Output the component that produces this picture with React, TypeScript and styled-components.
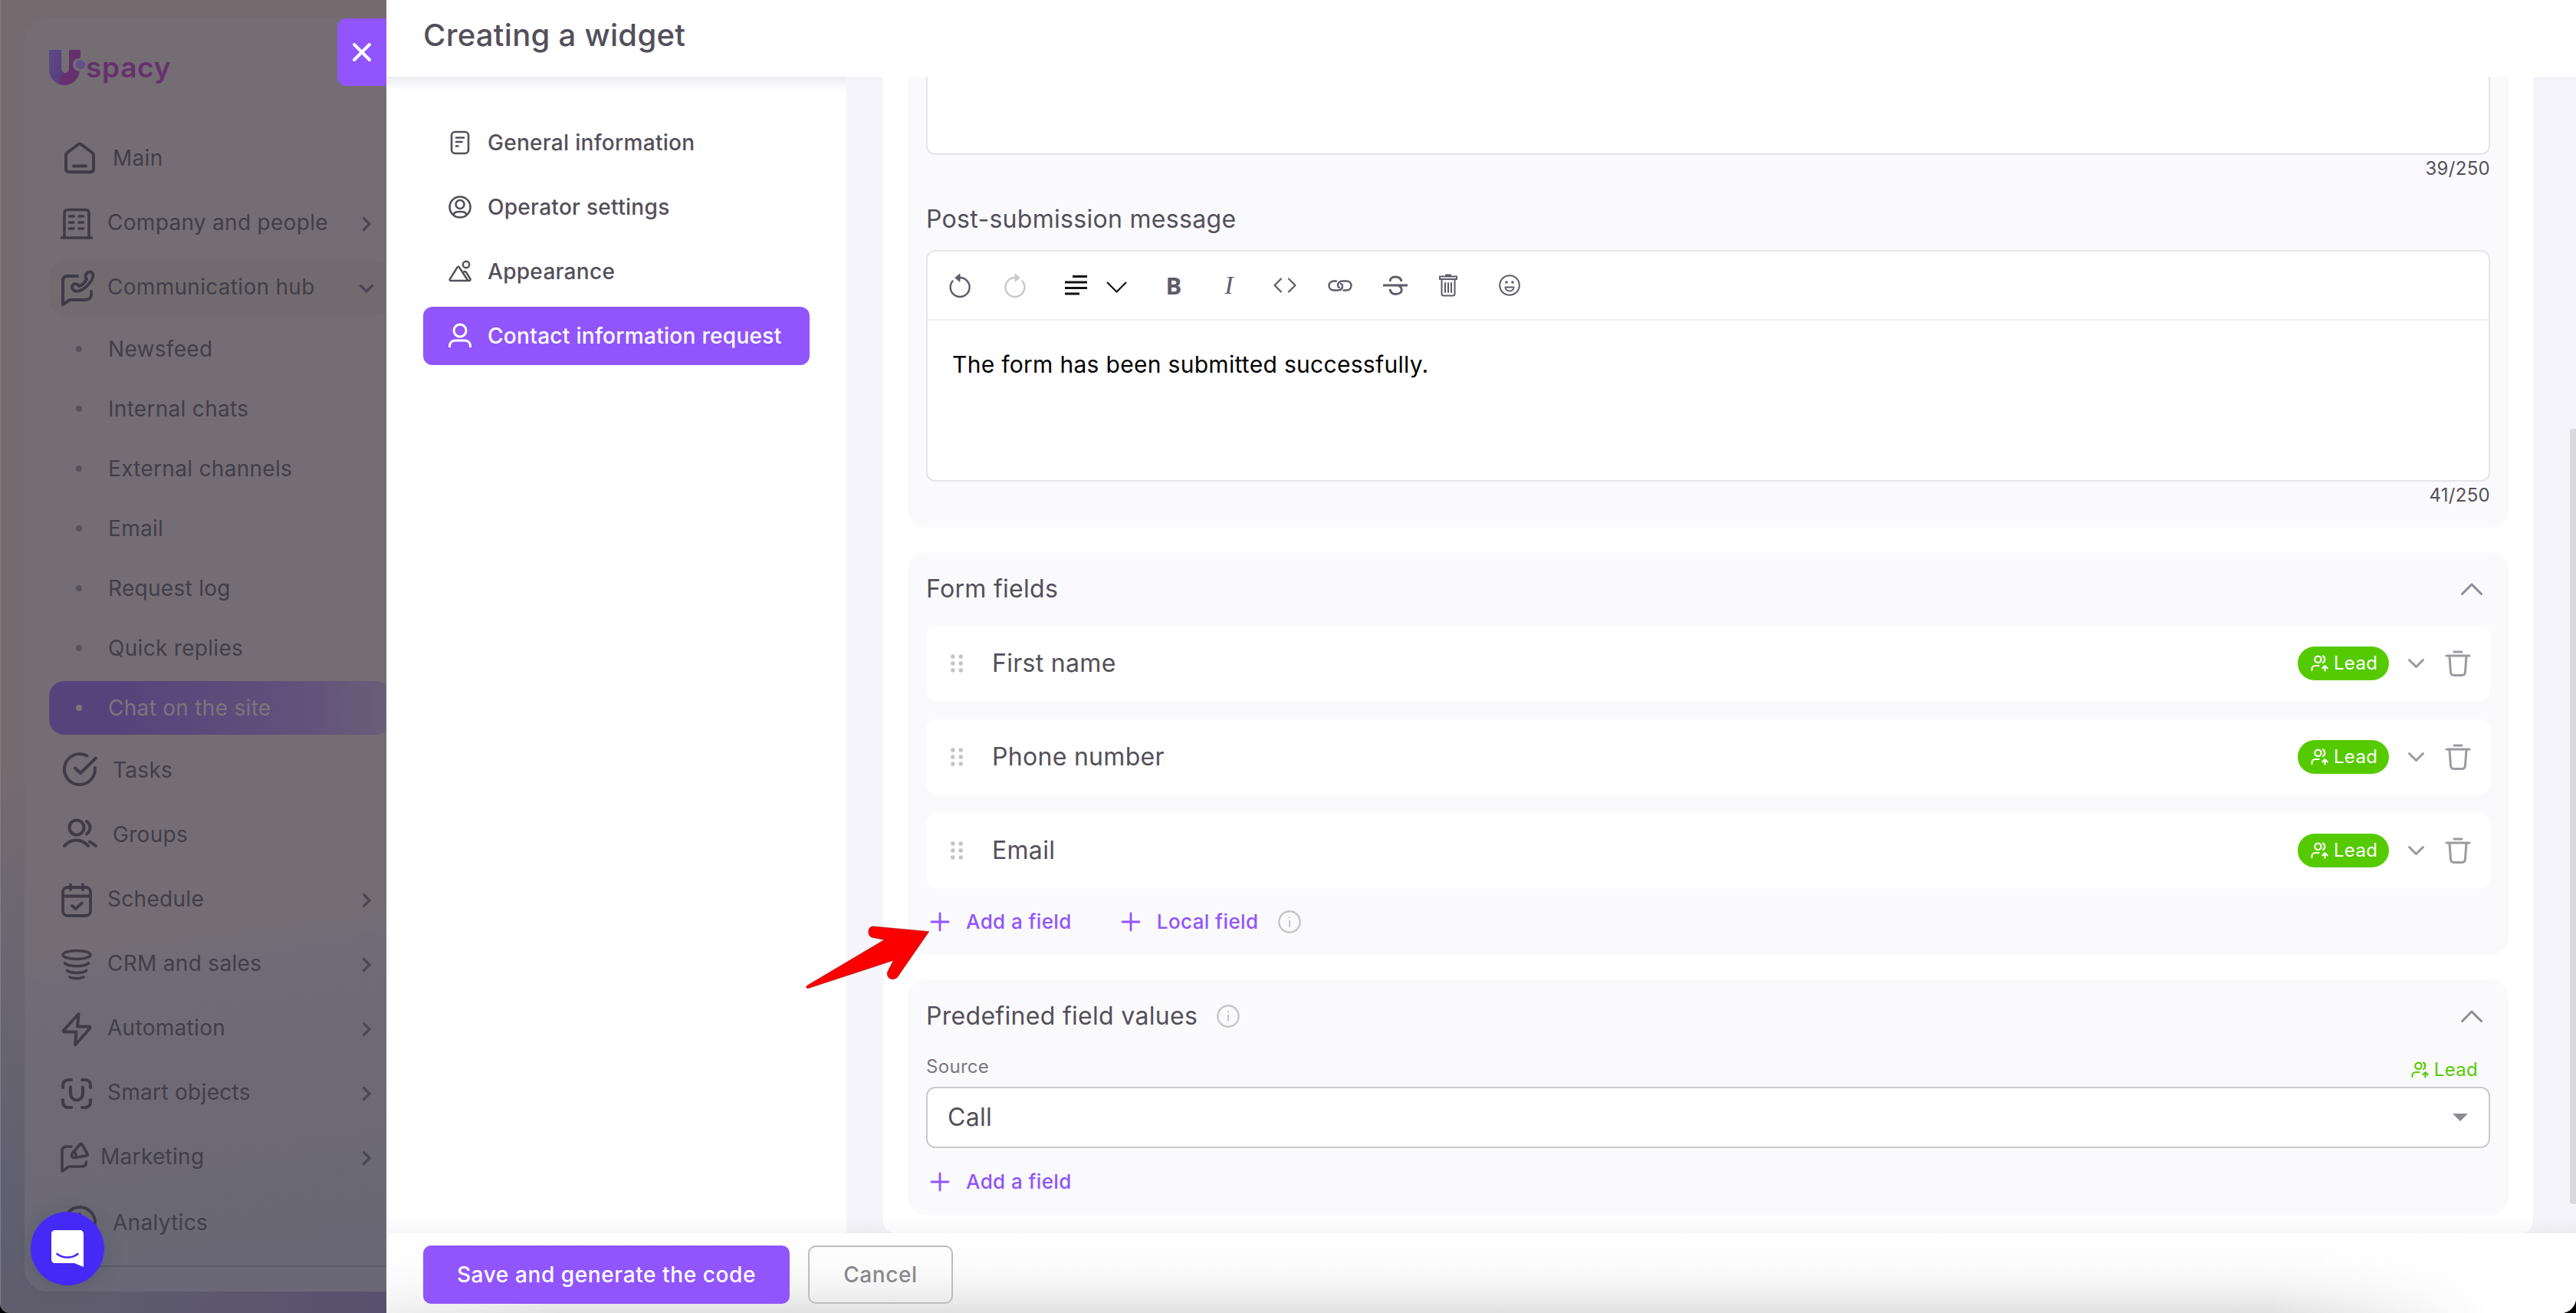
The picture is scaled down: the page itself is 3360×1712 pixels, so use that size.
import React from "react";
import styled, { createGlobalStyle } from "styled-components";

const GlobalStyle = createGlobalStyle`
  * { box-sizing: border-box; }
  html, body { margin: 0; padding: 0; background: #000; }
  body { font-family: Inter, "Liberation Sans", sans-serif; width: 3360px; height: 1712px; overflow: hidden; }
  button { font-family: inherit; border: 0; padding: 0; background: none; }
  svg { display: block; flex: none; overflow: visible; }
`;

const Page = styled.div`
  position: relative;
  display: flex;
  width: 3360px;
  height: 1712px;
  overflow: hidden;
  border-radius: 0 0 20px 12px;
  letter-spacing: 0.3px;
`;

/* ---------- dimmed sidebar ---------- */

const Backdrop = styled.div`
  width: 504px;
  flex: none;
  padding: 24px 0 28px 31px;
  border-left: 1px solid #817f84;
  background:
    linear-gradient(90deg, rgba(90, 76, 118, 0) 20%, rgba(86, 74, 112, 0.7) 100%) 0 100% / 100% 28px no-repeat,
    linear-gradient(180deg, #756a6e 0, #756a6e 58%, #6b6772 72%, #605f70 92%, #5f5d6c 100%);
`;

const Sidebar = styled.aside`
  display: flex;
  flex-direction: column;
  height: 1660px;
  padding-left: 32px;
  border-radius: 30px 0 0 30px;
  overflow: hidden;
  background: linear-gradient(172deg, #746d74 0, #746d74 71%, #706c77 73%, #6e6a75 82%, #6a6876 96%);
`;

const Logo = styled.div`
  display: flex;
  align-items: flex-start;
  height: 146px;
  padding-top: 41px;
`;

const LogoText = styled.span`
  margin-left: 5px;
  font-size: 37px;
  line-height: 46px;
  font-weight: 600;
  letter-spacing: 0.7px;
  color: #66306e;
`;

const MenuRow = styled.div<{ $open?: boolean; $gap?: number }>`
  display: flex;
  align-items: center;
  flex: none;
  height: 72px;
  width: 446px;
  margin-bottom: ${(p) => p.$gap ?? 12}px;
  border-radius: 22px;
  background: ${(p) => (p.$open ? "#716b70" : "transparent")};
`;

const MenuIcon = styled.span<{ $w: number; $pad?: number }>`
  display: flex;
  width: ${(p) => p.$w}px;
  padding-left: ${(p) => p.$pad ?? 14}px;
  color: #3f3b47;
`;

const MenuText = styled.span<{ $lift?: boolean }>`
  flex: 1;
  font-size: 28px;
  line-height: 40px;
  white-space: nowrap;
  color: #413e49;
  margin-top: ${(p) => (p.$lift ? -5 : 0)}px;
`;

const MenuChevron = styled.span`
  display: flex;
  justify-content: center;
  width: 40px;
  margin-right: 12px;
  color: #4b4754;
`;

const SubList = styled.div`
  display: flex;
  flex-direction: column;
  gap: 8px;
  margin: -4px 0 10px;
`;

const SubItem = styled.div<{ $active?: boolean }>`
  display: flex;
  align-items: center;
  height: 70px;
  width: 446px;
  padding-left: 35px;
  gap: 34px;
  border-radius: 20px;
  font-size: 28px;
  line-height: 40px;
  white-space: nowrap;
  color: ${(p) => (p.$active ? "#7c757b" : "#413e49")};
  background: ${(p) =>
    p.$active ? "linear-gradient(90deg, #57437b 0, #57437b 20%, #5f4e7b 62%, #64547a 80%, #6a5f78 100%)" : "transparent"};
`;

const Bullet = styled.i<{ $active?: boolean }>`
  width: 8px;
  height: 8px;
  border-radius: 50%;
  background: ${(p) => (p.$active ? "#7c757b" : "#55525f")};
`;

const SidebarDivider = styled.div`
  height: 2px;
  margin-top: 8px;
  background: #5e5b67;
`;

const CloseButton = styled.button`
  position: absolute;
  left: 440px;
  top: 24px;
  width: 64px;
  height: 88px;
  display: flex;
  align-items: center;
  justify-content: center;
  border-radius: 12px 0 0 12px;
  background: #9155fd;
  color: #fff;
`;

const ChatLauncher = styled.button`
  position: absolute;
  left: 40px;
  top: 1580px;
  width: 96px;
  height: 96px;
  display: flex;
  align-items: center;
  justify-content: center;
  border-radius: 50%;
  background: #4529f7;
  box-shadow: 0 4px 24px rgba(60, 60, 75, 0.25);
`;

/* ---------- drawer ---------- */

const Drawer = styled.main`
  display: flex;
  flex-direction: column;
  flex: 1;
  min-width: 0;
  background: #fff;
`;

const Header = styled.header`
  display: flex;
  align-items: center;
  height: 100px;
  flex: none;
  padding: 0 0 9px 48px;
`;

const Title = styled.h1`
  margin: 0;
  font-size: 40px;
  line-height: 56px;
  font-weight: 500;
  color: #544f5a;
`;

const Body = styled.div`
  display: flex;
  height: 1508px;
  flex: none;
  background: linear-gradient(0deg, #ededf0 0, rgba(245, 244, 251, 0) 22px), #f5f4fb;
`;

const Nav = styled.nav`
  display: flex;
  flex-direction: column;
  gap: 8px;
  width: 600px;
  flex: none;
  padding: 48px 48px 0;
  background:
    linear-gradient(180deg, #ecebf1 0, rgba(255, 255, 255, 0) 18px),
    linear-gradient(0deg, #f7f7f8 0, rgba(255, 255, 255, 0) 22px),
    #fff;
`;

const NavItem = styled.div<{ $active?: boolean }>`
  display: flex;
  align-items: center;
  gap: 21px;
  height: 76px;
  padding-left: 33px;
  border-radius: 12px;
  font-size: 28px;
  line-height: 40px;
  font-weight: 500;
  white-space: nowrap;
  color: ${(p) => (p.$active ? "#fff" : "#544f5a")};
  background: ${(p) => (p.$active ? "#9155fd" : "transparent")};
`;

const Content = styled.div`
  display: flex;
  flex-direction: column;
  gap: 32px;
  width: 2152px;
  margin-left: 48px;
  padding: 0 32px;
  border-radius: 0 0 16px 16px;
  background: linear-gradient(0deg, #f7f7f8 0, rgba(255, 255, 255, 0) 22px), #fff;
`;

const ScrollTrack = styled.div`
  flex: 1;
  display: flex;
  justify-content: flex-end;
  padding-top: 459px;
`;

const ScrollThumb = styled.div`
  width: 8px;
  height: 1011px;
  border-radius: 4px 0 0 4px;
  background: #d9d9da;
`;

const Card = styled.section<{ $first?: boolean }>`
  display: flex;
  flex-direction: column;
  padding: 0 24px;
  padding-bottom: ${(p) => (p.$first ? 26 : 0)}px;
  border-radius: ${(p) => (p.$first ? "0 0 24px 24px" : "24px")};
  background: #fafafc;
`;

const Editor = styled.div<{ $cut?: boolean }>`
  display: flex;
  flex-direction: column;
  height: ${(p) => (p.$cut ? 102 : 302)}px;
  border: 2px solid #e5e5e7;
  border-top-width: ${(p) => (p.$cut ? 0 : 2)}px;
  border-radius: ${(p) => (p.$cut ? "0 0 12px 12px" : "12px")};
  background: #fff;
`;

const Counter = styled.div`
  height: 34px;
  text-align: right;
  font-size: 24px;
  line-height: 36px;
  color: #544f5a;
`;

const FieldLabel = styled.div`
  margin: 30px 0 20px;
  font-size: 32px;
  line-height: 40px;
  color: #544f5a;
`;

const Toolbar = styled.div`
  display: flex;
  align-items: center;
  height: 90px;
  border-bottom: 2px solid #eeeeee;
  color: #5f5b6b;
`;

const Tool = styled.span<{ $w: number; $color?: string }>`
  display: flex;
  align-items: center;
  justify-content: center;
  width: ${(p) => p.$w}px;
  height: 40px;
  color: ${(p) => p.$color ?? "inherit"};
`;

const BoldGlyph = styled.b`
  font: 700 31px/40px "Open Sans", sans-serif;
`;

const ItalicGlyph = styled.i`
  font: italic 500 34px/40px "Liberation Serif", serif;
`;

const EditorText = styled.p`
  margin: 36px 0 0 32px;
  font-size: 30px;
  line-height: 42px;
  color: #000;
`;

const CardHeader = styled.div<{ $h: number }>`
  display: flex;
  align-items: center;
  height: ${(p) => p.$h}px;
  padding-right: 10px;
  color: #8f8c95;
`;

const CardTitle = styled.h2`
  margin: 0 25px 0 0;
  font-size: 32px;
  line-height: 44px;
  font-weight: 400;
  color: #544f5a;
`;

const Spacer = styled.span`
  flex: 1;
`;

const FieldList = styled.div`
  display: flex;
  flex-direction: column;
  gap: 24px;
`;

const FieldRow = styled.div`
  display: flex;
  align-items: center;
  height: 98px;
  padding: 0 25px 0 32px;
  border-radius: 14px;
  background: #fff;
  color: #9b99a1;
`;

const FieldName = styled.span`
  flex: 1;
  margin-left: 38px;
  font-size: 32px;
  line-height: 44px;
  color: #544f5a;
`;

const LeadPill = styled.span`
  display: flex;
  align-items: center;
  gap: 6px;
  width: 119px;
  height: 44px;
  margin-right: 25px;
  padding-left: 17px;
  border-radius: 22px;
  font-size: 24px;
  line-height: 32px;
  color: #fff;
  background: #56ca00;
`;

const LeadTag = styled.span`
  display: flex;
  align-items: center;
  gap: 6px;
  margin: 5px 16px 0 0;
  font-size: 24px;
  line-height: 36px;
  color: #56ca00;
`;

const RowAction = styled.span<{ $w: number; $mr?: number }>`
  display: flex;
  justify-content: center;
  width: ${(p) => p.$w}px;
  margin-right: ${(p) => p.$mr ?? 0}px;
`;

const ActionRow = styled.div`
  display: flex;
  align-items: center;
  height: 87px;
  padding-left: 6px;
`;

const AddButton = styled.button<{ $mr?: number }>`
  display: flex;
  align-items: center;
  gap: 22px;
  margin-right: ${(p) => p.$mr ?? 0}px;
  font-size: 26px;
  line-height: 40px;
  font-weight: 500;
  letter-spacing: 0.4px;
  color: #9155fd;
`;

const SourceRow = styled.div`
  display: flex;
  justify-content: space-between;
  align-items: flex-start;
  height: 45px;
`;

const SourceLabel = styled.span`
  font-size: 24px;
  line-height: 37px;
  color: #7b7881;
`;

const Select = styled.div`
  display: flex;
  align-items: center;
  justify-content: space-between;
  height: 80px;
  padding: 0 27px 0 26px;
  border: 2px solid #cbcbce;
  border-radius: 12px;
  font-size: 32px;
  line-height: 44px;
  color: #544f5a;
  background: #fff;
`;

const Footer = styled.footer`
  display: flex;
  align-items: center;
  gap: 24px;
  height: 104px;
  flex: none;
  padding: 4px 0 0 48px;
  background:
    linear-gradient(90deg, rgba(255, 255, 255, 0.5) 0, rgba(255, 255, 255, 0) 8%, rgba(255, 255, 255, 0) 86%, #fff 96%),
    linear-gradient(180deg, #fff 0, #fcfcfc 40%, #f3f3f4 70%, #e2e2e2 100%);
`;

const Button = styled.button<{ $primary?: boolean }>`
  height: 76px;
  width: ${(p) => (p.$primary ? 478 : 189)}px;
  border: ${(p) => (p.$primary ? "0" : "2px solid #bdbdbf")};
  border-radius: 10px;
  font-size: 28px;
  line-height: 40px;
  font-weight: 500;
  letter-spacing: 0.6px;
  color: ${(p) => (p.$primary ? "#fff" : "#8a888c")};
  background: ${(p) => (p.$primary ? "#9155fd" : "transparent")};
`;

const PointerOverlay = styled.svg`
  position: absolute;
  left: 1040px;
  top: 1180px;
`;

/* ---------- icons ---------- */

type IconProps = { w: number; h: number; sw?: number; children: React.ReactNode; fill?: string };
const Icon = ({ w, h, sw = 3, fill = "none", children }: IconProps) => (
  <svg
    width={w}
    height={h}
    viewBox={`0 0 ${w} ${h}`}
    fill={fill}
    stroke="currentColor"
    strokeWidth={sw}
    strokeLinecap="round"
    strokeLinejoin="round"
  >
    {children}
  </svg>
);

const ChevronRight = () => (
  <Icon w={12} h={20} sw={3.2}>
    <path d="M1.5 1.5 10 10 1.5 18.5" strokeLinecap="butt" strokeLinejoin="miter" />
  </Icon>
);
const ChevronDown = () => (
  <Icon w={20} h={12} sw={3.2}>
    <path d="M1.5 1.5 10 10 18.5 1.5" strokeLinecap="butt" strokeLinejoin="miter" />
  </Icon>
);

const icons = {
  home: (
    <Icon w={48} h={44} sw={4}>
      <path d="M6 18.500C6 17 6.600 16 7.800 15L21.800 4.500C23.200 3.300 24.800 3.300 26.200 4.500L40.200 15C41.400 16 42 17 42 18.500V36C42 38.800 40.500 40.300 38 40.300H10C7.500 40.300 6 38.800 6 36Z" />
      <path d="M16 32.500H32" />
    </Icon>
  ),
  company: (
    <Icon w={44} h={44} sw={3.6}>
      <path d="M2.500 40H41.500" />
      <path d="M6 40V8C6 5 7.500 3.500 10.500 3.500H33.500C36.500 3.500 38 5 38 8V40" />
      <path d="M12.500 12H18M25 12H30.500M12.500 20H18M25 20H30.500M12.500 28H18M25 28H30.500" />
    </Icon>
  ),
  hub: (
    <Icon w={46} h={48} sw={4}>
      <path d="M23 8H10C6 8 4 10 4 14V45L13 39H33C38 39 41 36 41 32V28" />
      <path d="M34 6C36 2 41 1 43 5C44 8 43 11 41 14C37 20 32 25 26 27C21 29 16 27 16 22C17 17 22 17 25 21C29 20 33 16 35 12C33 10 33 8 34 6Z" />
    </Icon>
  ),
  tasks: (
    <Icon w={48} h={46} sw={4}>
      <path d="M33.500 4.500A20 20 0 1 0 43.800 20" />
      <path d="M18 20.500 25 27 45 7.500" />
    </Icon>
  ),
  groups: (
    <Icon w={48} h={42} sw={4}>
      <circle cx="21" cy="12" r="9.500" />
      <path d="M34 4C40 8 40 16 34 20.500" />
      <path d="M5 36C14 26 27 26 36 36" />
      <path d="M38 30.500C41 32 43.500 34 46 36" />
    </Icon>
  ),
  schedule: (
    <Icon w={44} h={46} sw={3.8}>
      <rect x="4" y="6" width="36" height="37" rx="6" />
      <path d="M4 17.500H40M14 2.500V9M30 2.500V9M16 30 20.500 34 29 26.500" />
    </Icon>
  ),
  crm: (
    <Icon w={44} h={44} sw={3.6}>
      <ellipse cx="22" cy="9" rx="18" ry="5.500" />
      <path d="M6.500 20C13 25 31 25 37.500 20M9.500 29.500C15 33.500 29 33.500 34.500 29.500M13 38C18 40.500 26 40.500 31 38" />
    </Icon>
  ),
  automation: (
    <Icon w={44} h={46} sw={4}>
      <path d="M24.500 3 5 24.500C4.500 25.500 5 26.500 6 26.500H21.500L20 43.500 39.500 21.500C40 20.500 39.500 19.500 38.500 19.500H23Z" />
    </Icon>
  ),
  smart: (
    <Icon w={44} h={44} sw={4.2}>
      <path d="M4 14V11C4 7 7 4 11 4H15M29 4H33C37 4 40 7 40 11V14M4 30V33C4 37 7 40 11 40H15M29 40H33C37 40 40 37 40 33V30" />
      <path d="M14 13.500V22C14 27 17.500 30.500 22 30.500C26.500 30.500 30 27 30 22V13.500" />
    </Icon>
  ),
  marketing: (
    <Icon w={42} h={42} sw={3.6}>
      <path d="M15 6H9C5 6 3 8 3 12V38L12 32H29C33 32 34.500 30 34.500 26" />
      <path d="M26 3.500C27.500 2 28 2 29 3.500L36 15.500C36.500 17 36.200 17.500 35 17.800L19 20.500C15.500 20.500 14.500 17 16.500 14.500ZM20 14 22 20" />
    </Icon>
  ),
  analytics: (
    <Icon w={48} h={46} sw={4}>
      <circle cx="24" cy="23" r="20" />
      <path d="M24 12V23L32 30" />
    </Icon>
  ),
};

const navIcons = [
  <Icon w={30} h={32} sw={2.6} key="doc">
    <rect x="4" y="2" width="22" height="28" rx="4.500" />
    <path d="M10 9.500H20M10 15H17.500M10 20.500H12.500" />
  </Icon>,
  <Icon w={30} h={32} sw={2.6} key="op">
    <circle cx="15" cy="16" r="13.500" />
    <circle cx="15" cy="12.500" r="5.500" />
    <path d="M6.500 26C7.500 22.500 10 22 15 22C20 22 22.500 22.500 23.500 26" />
  </Icon>,
  <Icon w={30} h={32} sw={2.4} key="ap">
    <circle cx="23" cy="7" r="4.200" />
    <path d="M11.500 10.500C12.500 9.500 13.500 9.500 14.300 11L25.500 28H3C1.500 28 1.200 27 1.800 25.800ZM19 17.500C20.500 15.500 22 15.500 23 17L28.300 25.500C29 27 28.500 28 27 28H25" />
  </Icon>,
  <Icon w={30} h={32} sw={3} key="us">
    <circle cx="15" cy="9" r="8" />
    <path d="M1.500 31V29C1.500 25 4.500 22 8.500 22H21.500C25.500 22 28.500 25 28.500 29V31" strokeLinecap="butt" />
  </Icon>,
];

const LeadIcon = () => (
  <Icon w={24} h={24} sw={2.2}>
    <circle cx="9.500" cy="6.800" r="4.200" />
    <path d="M1.500 21V19.500C1.500 17 3.500 15 6 15H10.500M16 2.500C19 4 19 9.500 16 11M18.500 21.500V16M15.300 18.300 18.500 15.200 21.700 18.300" />
  </Icon>
);

const TrashOutline = () => (
  <Icon w={34} h={36} sw={3}>
    <path d="M12 3H22M2 8H32M6 8.500 7.500 29C7.700 32 9 33.500 12 33.500H22C25 33.500 26.300 32 26.500 29L28 8.500" />
  </Icon>
);

const SmallChevron = () => (
  <Icon w={21} h={13} sw={3}>
    <path d="M1.500 1.500 10.500 10.500 19.500 1.500" />
  </Icon>
);

const CollapseIcon = () => (
  <Icon w={28} h={16} sw={3}>
    <path d="M1.500 14.500 14 2 26.500 14.500" />
  </Icon>
);

const Plus = () => (
  <Icon w={24} h={24} sw={2.8}>
    <path d="M12 1V23M1 12H23" />
  </Icon>
);

const InfoBadge = styled.span`
  color: #c6c6c9;
`;

const Info = () => (
  <InfoBadge>
    <Icon w={30} h={30} sw={2.4}>
      <circle cx="15" cy="15" r="13.700" />
      <path d="M15 13.500V21M15 9V9.500" strokeWidth="2" />
    </Icon>
  </InfoBadge>
);

const DragHandle = () => (
  <Icon w={16} h={24} fill="#c4c4c6" sw={0}>
    {[3, 12, 21].map((y) =>
      [2.8, 13.2].map((x) => <circle key={`${x}-${y}`} cx={x} cy={y} r="2.700" />)
    )}
  </Icon>
);

/* ---------- data ---------- */

const subItems = ["Newsfeed", "Internal chats", "External channels", "Email", "Request log", "Quick replies", "Chat on the site"];
const groups: [keyof typeof icons, string, number][] = [
  ["schedule", "Schedule", 76],
  ["crm", "CRM and sales", 76],
  ["automation", "Automation", 76],
  ["smart", "Smart objects", 76],
  ["marketing", "Marketing", 67],
];
const navItems = ["General information", "Operator settings", "Appearance", "Contact information request"];

export default function App() {
  return (
    <>
      <GlobalStyle />
      <Page>
        <Backdrop>
          <Sidebar>
            <Logo>
              <svg width="43" height="46" viewBox="0 0 43 46">
                <defs>
                  <linearGradient id="u" x1="0" x2="1" y1="0" y2="0.3">
                    <stop offset="0" stopColor="#5c4a85" />
                    <stop offset="0.5" stopColor="#59407f" />
                    <stop offset="0.62" stopColor="#66306e" />
                    <stop offset="1" stopColor="#66306e" />
                  </linearGradient>
                </defs>
                <path
                  d="M0 0H16V24C16 27.500 18 30 21 30C24 30 26 27.500 26 24V0H41V11C34 11 31 15 31 19C31 24 35 28 40 28C38 39 30 46 20.500 46C9 46 0 37 0 25Z"
                  fill="url(#u)"
                />
                <circle cx="41" cy="19" r="6" fill="#63508a" />
              </svg>
              <LogoText>spacy</LogoText>
            </Logo>

            <MenuRow $gap={14}>
              <MenuIcon $w={83} $pad={16}>{icons.home}</MenuIcon>
              <MenuText>Main</MenuText>
            </MenuRow>
            <MenuRow>
              <MenuIcon $w={76}>{icons.company}</MenuIcon>
              <MenuText $lift>Company and people</MenuText>
              <MenuChevron><ChevronRight /></MenuChevron>
            </MenuRow>
            <MenuRow $open>
              <MenuIcon $w={76}>{icons.hub}</MenuIcon>
              <MenuText $lift>Communication hub</MenuText>
              <MenuChevron><ChevronDown /></MenuChevron>
            </MenuRow>
            <SubList>
              {subItems.map((t, i) => (
                <SubItem key={t} $active={i === 6}>
                  <Bullet $active={i === 6} />
                  {t}
                </SubItem>
              ))}
            </SubList>
            <MenuRow>
              <MenuIcon $w={83} $pad={16}>{icons.tasks}</MenuIcon>
              <MenuText>Tasks</MenuText>
            </MenuRow>
            <MenuRow $gap={14}>
              <MenuIcon $w={83} $pad={15}>{icons.groups}</MenuIcon>
              <MenuText>Groups</MenuText>
            </MenuRow>
            {groups.map(([icon, label, w]) => (
              <MenuRow key={label}>
                <MenuIcon $w={w}>{icons[icon]}</MenuIcon>
                <MenuText $lift>{label}</MenuText>
                <MenuChevron><ChevronRight /></MenuChevron>
              </MenuRow>
            ))}
            <MenuRow>
              <MenuIcon $w={83} $pad={16}>{icons.analytics}</MenuIcon>
              <MenuText>Analytics</MenuText>
            </MenuRow>
            <SidebarDivider />
          </Sidebar>
        </Backdrop>

        <Drawer>
          <Header>
            <Title>Creating a widget</Title>
          </Header>
          <Body>
            <Nav>
              {navItems.map((t, i) => (
                <NavItem key={t} $active={i === 3}>
                  {navIcons[i]}
                  {t}
                </NavItem>
              ))}
            </Nav>
            <Content>
              <Card $first>
                <Editor $cut />
                <Counter>39/250</Counter>
                <FieldLabel>Post-submission message</FieldLabel>
                <Editor>
                  <Toolbar>
                    <Tool $w={84}>
                      <Icon w={28} h={32} sw={2.4}>
                        <path d="M4.500 10.500A12.500 12.500 0 1 0 14 6H13" />
                        <path d="M8 6 14 1V11Z" fill="currentColor" strokeWidth="1" />
                      </Icon>
                    </Tool>
                    <Tool $w={60} $color="#c9c9cb">
                      <Icon w={28} h={32} sw={2.4}>
                        <path d="M23.500 10.500A12.500 12.500 0 1 1 14 6H15" />
                        <path d="M20 6 14 1V11Z" fill="currentColor" strokeWidth="1" />
                      </Icon>
                    </Tool>
                    <Tool $w={150} $color="#111">
                      <Icon w={82} h={26} sw={3}>
                        <path d="M11 1.500H30M1 9H30M1 16.500H30M1 24H20" strokeLinecap="butt" />
                        <path d="M56 9 68.500 21.500 81 9" strokeLinecap="butt" strokeLinejoin="miter" strokeWidth="2.200" />
                      </Icon>
                    </Tool>
                    <Tool $w={54}><BoldGlyph>B</BoldGlyph></Tool>
                    <Tool $w={90}><ItalicGlyph>I</ItalicGlyph></Tool>
                    <Tool $w={56}>
                      <Icon w={30} h={20} sw={2.2}>
                        <path d="M10 1.500 1.500 10 10 18.500M20 1.500 28.500 10 20 18.500" />
                      </Icon>
                    </Tool>
                    <Tool $w={88}>
                      <Icon w={32} h={16} sw={2.4}>
                        <path d="M11 2.500H8C4 2.500 1.500 5 1.500 8.500C1.500 12 4 14.500 8 14.500H13C17 14.500 19 12 19 8.500C19 7.500 18 6.500 17 6M20.500 14.500H24C28 14.500 30.500 12 30.500 8.500C30.500 5 28 2.500 24 2.500H19C15 2.500 13 5 13 8.500C13 9.500 14 10.500 15 11" />
                      </Icon>
                    </Tool>
                    <Tool $w={56}>
                      <Icon w={32} h={26} sw={2.8}>
                        <path d="M0 13H32M9.500 8C8.500 4.500 11.500 2 16 2C20.500 2 23.500 4 24 8M9 18C9.500 22 12 24.500 16.500 24.500C21.500 24.500 25 22 24 17.500C23.500 15 21.500 14 20 13.500" strokeLinecap="butt" />
                      </Icon>
                    </Tool>
                    <Tool $w={82}>
                      <Icon w={24} h={30} sw={2}>
                        <path d="M1 3.500H23V7H1ZM9 3V1.500H15V3M3.500 7V26C3.500 28 4 28.500 6 28.500H18C20 28.500 20.500 28 20.500 26V7M8 12V24M12 12V24M16 12V24" />
                      </Icon>
                    </Tool>
                    <Tool $w={78}>
                      <Icon w={28} h={28} sw={2}>
                        <circle cx="14" cy="14" r="12.800" />
                        <path d="M8.500 16.500H19.500C19.500 23 8.500 23 8.500 16.500Z" />
                        <circle cx="10" cy="10" r="0.800" />
                        <circle cx="18" cy="10" r="0.800" />
                      </Icon>
                    </Tool>
                  </Toolbar>
                  <EditorText>The form has been submitted successfully.</EditorText>
                </Editor>
                <Counter>41/250</Counter>
              </Card>

              <Card>
                <CardHeader $h={96}>
                  <CardTitle>Form fields</CardTitle>
                  <Spacer />
                  <CollapseIcon />
                </CardHeader>
                <FieldList>
                  {["First name", "Phone number", "Email"].map((name) => (
                    <FieldRow key={name}>
                      <DragHandle />
                      <FieldName>{name}</FieldName>
                      <LeadPill><LeadIcon />Lead</LeadPill>
                      <RowAction $w={21} $mr={27}><SmallChevron /></RowAction>
                      <RowAction $w={34}><TrashOutline /></RowAction>
                    </FieldRow>
                  ))}
                </FieldList>
                <ActionRow>
                  <AddButton $mr={65}><Plus />Add a field</AddButton>
                  <AddButton $mr={25}><Plus />Local field</AddButton>
                  <Info />
                </ActionRow>
              </Card>

              <Card>
                <CardHeader $h={95}>
                  <CardTitle>Predefined field values</CardTitle>
                  <Info />
                  <Spacer />
                  <CollapseIcon />
                </CardHeader>
                <SourceRow>
                  <SourceLabel>Source</SourceLabel>
                  <LeadTag><LeadIcon />Lead</LeadTag>
                </SourceRow>
                <Select>
                  Call
                  <svg width="20" height="10" viewBox="0 0 20 10"><path d="M0 0H20L10 10Z" fill="#8d8b92" /></svg>
                </Select>
                <ActionRow>
                  <AddButton><Plus />Add a field</AddButton>
                </ActionRow>
              </Card>
            </Content>
            <ScrollTrack>
              <ScrollThumb />
            </ScrollTrack>
          </Body>
          <Footer>
            <Button $primary>Save and generate the code</Button>
            <Button>Cancel</Button>
          </Footer>
        </Drawer>

        <CloseButton aria-label="Close">
          <Icon w={26} h={26} sw={4}>
            <path d="M3 3 23 23M23 3 3 23" />
          </Icon>
        </CloseButton>

        <ChatLauncher aria-label="Chat">
          <svg width="42" height="48" viewBox="0 0 42 48">
            <path d="M5 0H37C40 0 42 2 42 5V48L30 43H5C2 43 0 41 0 38V5C0 2 2 0 5 0Z" fill="#fff" />
            <path d="M7.500 31C15 37 27 37 34.500 31" fill="none" stroke="#4529f7" strokeWidth="2.600" strokeLinecap="round" />
          </svg>
        </ChatLauncher>

        <PointerOverlay width="200" height="120" viewBox="0 0 200 120">
          <path
            d="M172 34.500 99 27.800C95 27.800 92.700 31 92.700 35C92.700 39.500 95 42.300 99 42.700L113 45.500 12.500 105C10.500 107 12 109.500 15 108.600L125 72.500 118 86C116 90 117.500 94.500 121 96.200C125 97.800 129.500 96.500 131.500 93Z"
            fill="#fb0000"
            stroke="rgba(70,70,70,0.45)"
            strokeWidth="0.800"
          />
        </PointerOverlay>
      </Page>
    </>
  );
}
